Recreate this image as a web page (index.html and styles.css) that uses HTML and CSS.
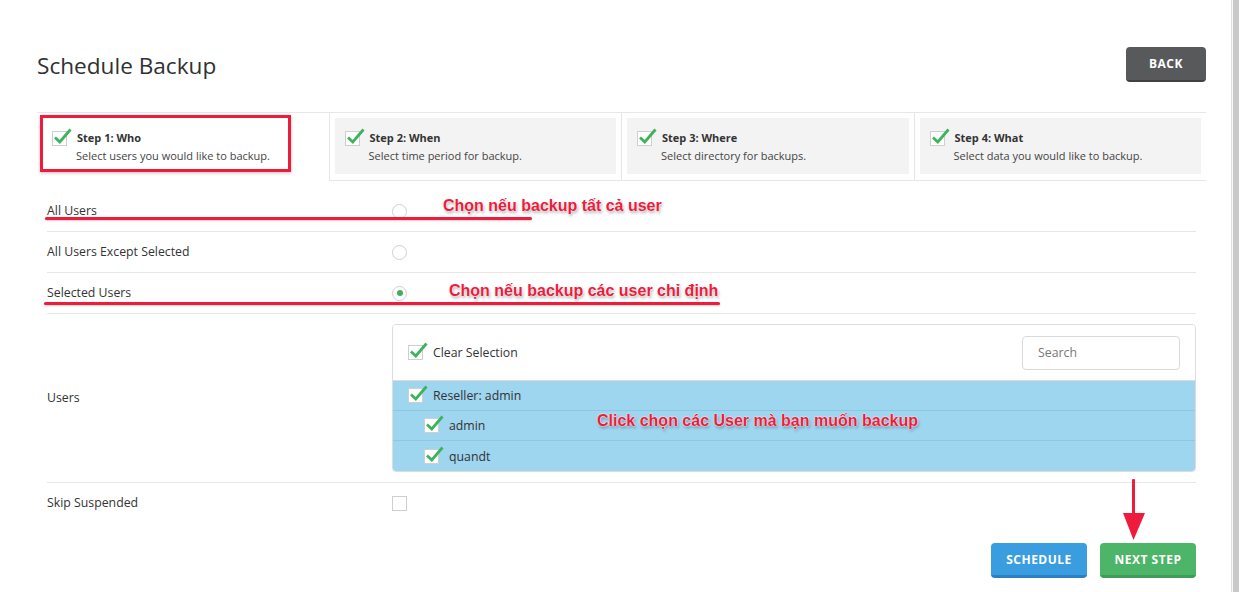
FILE: index.html
```html
<!DOCTYPE html>
<html lang="en">
<head>
<meta charset="utf-8">
<title>Schedule Backup</title>
<link rel="stylesheet" href="styles.css">
</head>
<body>
<div class="frame">
  <main class="page">
    <header class="head">
      <h1 class="title">Schedule Backup</h1>
      <button class="btn btn-back" type="button">BACK</button>
    </header>

    <nav class="steps">
      <div class="step active">
        <div class="step-box">
          <span class="cb"><svg class="tick" viewBox="0 -4 22 20"><path d="M3 6.5 L7.8 11 L18.5 -1.5"/></svg></span>
          <div class="step-title">Step 1: Who</div>
          <div class="step-desc">Select users you would like to backup.</div>
        </div>
      </div>
      <div class="step">
        <div class="step-box">
          <span class="cb"><svg class="tick" viewBox="0 -4 22 20"><path d="M3 6.5 L7.8 11 L18.5 -1.5"/></svg></span>
          <div class="step-title">Step 2: When</div>
          <div class="step-desc">Select time period for backup.</div>
        </div>
      </div>
      <div class="step">
        <div class="step-box">
          <span class="cb"><svg class="tick" viewBox="0 -4 22 20"><path d="M3 6.5 L7.8 11 L18.5 -1.5"/></svg></span>
          <div class="step-title">Step 3: Where</div>
          <div class="step-desc">Select directory for backups.</div>
        </div>
      </div>
      <div class="step">
        <div class="step-box">
          <span class="cb"><svg class="tick" viewBox="0 -4 22 20"><path d="M3 6.5 L7.8 11 L18.5 -1.5"/></svg></span>
          <div class="step-title">Step 4: What</div>
          <div class="step-desc">Select data you would like to backup.</div>
        </div>
      </div>
    </nav>

    <form class="form">
      <div class="row">
        <div class="label">All Users</div>
        <div class="field"><span class="radio"></span></div>
      </div>
      <div class="row">
        <div class="label">All Users Except Selected</div>
        <div class="field"><span class="radio"></span></div>
      </div>
      <div class="row">
        <div class="label">Selected Users</div>
        <div class="field"><span class="radio on"></span></div>
      </div>
      <div class="row row-users">
        <div class="label">Users</div>
        <div class="field">
          <div class="picker">
            <div class="picker-head">
              <div class="item">
                <span class="cb"><svg class="tick" viewBox="0 -4 22 20"><path d="M3 6.5 L7.8 11 L18.5 -1.5"/></svg></span>
                <span>Clear Selection</span>
              </div>
              <input class="search" type="text" placeholder="Search">
            </div>
            <div class="urow">
              <div class="item">
                <span class="cb"><svg class="tick" viewBox="0 -4 22 20"><path d="M3 6.5 L7.8 11 L18.5 -1.5"/></svg></span>
                <span>Reseller: admin</span>
              </div>
            </div>
            <div class="urow child">
              <div class="item">
                <span class="cb"><svg class="tick" viewBox="0 -4 22 20"><path d="M3 6.5 L7.8 11 L18.5 -1.5"/></svg></span>
                <span>admin</span>
              </div>
            </div>
            <div class="urow child">
              <div class="item">
                <span class="cb"><svg class="tick" viewBox="0 -4 22 20"><path d="M3 6.5 L7.8 11 L18.5 -1.5"/></svg></span>
                <span>quandt</span>
              </div>
            </div>
          </div>
        </div>
      </div>
      <div class="row last">
        <div class="label">Skip Suspended</div>
        <div class="field"><span class="cb"></span></div>
      </div>
    </form>

    <div class="actions">
      <button class="btn btn-blue" type="button">SCHEDULE</button>
      <button class="btn btn-green" type="button">NEXT STEP</button>
    </div>

    <div class="anno-box"></div>
    <div class="anno-text t1">Chọn nếu backup tất cả user</div>
    <div class="anno-line l1"></div>
    <div class="anno-text t2">Chọn nếu backup các user chỉ định</div>
    <div class="anno-line l2"></div>
    <div class="anno-text t3">Click chọn các User mà bạn muốn backup</div>
    <svg class="anno-arrow" viewBox="0 0 28 64"><rect x="12" y="1" width="3" height="36" rx="1"/><polygon points="3,35 25,35 13.5,62"/></svg>
  </main>
  <div class="scrollbar"></div>
</div>
</body>
</html>
```

FILE: styles.css
```css
html, body {
  margin: 0;
  padding: 0;
  background: #fff;
}

body {
  font-family: "Open Sans", "Noto Sans", sans-serif;
  color: #333;
}

.frame {
  display: flex;
  min-height: 592px;
}

.page {
  flex: 1;
  position: relative;
  padding: 47px 25px 0 37px;
}

.scrollbar {
  width: 8px;
  background: linear-gradient(to right, #dedede 0 1px, #f8f8f8 1px 2px, #c9c9c9 2px);
}

/* header */
.head {
  display: flex;
  justify-content: space-between;
  align-items: center;
  height: 35px;
}

.title {
  margin: 0;
  font-size: 22.6px;
  font-weight: 400;
  color: #2f3133;
  line-height: 30px;
  padding-top: 2px;
}

.btn {
  border: 0;
  border-radius: 4px;
  color: #fff;
  font-family: "Open Sans", sans-serif;
  font-weight: 700;
  font-size: 12px;
  letter-spacing: 0.5px;
  height: 35px;
  padding: 0;
  cursor: pointer;
}

.btn-back {
  width: 80px;
  background: #58595b;
  border-bottom: 2px solid #3f4042;
}

.btn-blue {
  width: 96px;
  background: #3a9de0;
  border-bottom: 3px solid #2c7fc2;
}

.btn-green {
  width: 96px;
  background: #4cb568;
  border-bottom: 3px solid #3e9d57;
}

/* steps */
.steps {
  display: flex;
  margin-top: 30px;
  border-top: 1px solid #e7e7e7;
}

.step {
  flex: 1;
  padding: 5px 5px 6px;
  border-bottom: 1px solid #e7e7e7;
}

.step + .step {
  border-left: 1px solid #e7e7e7;
}

.step.active {
  border-bottom-color: transparent;
}

.step-box {
  box-sizing: border-box;
  height: 56px;
  padding: 12px 10px 0;
  background: #f3f3f3;
  display: grid;
  grid-template-columns: 15px 1fr;
  column-gap: 10px;
  row-gap: 2px;
  align-content: start;
}

.active .step-box {
  background: transparent;
}

.step-box .cb {
  align-self: center;
}

.step-title {
  font-size: 11px;
  font-weight: 700;
  line-height: 16px;
  color: #333;
}

.step-desc {
  grid-column: 2;
  font-size: 11px;
  line-height: 16px;
  color: #444;
  margin-left: -1px;
}

/* checkbox + radio */
.cb {
  position: relative;
  display: inline-block;
  box-sizing: border-box;
  width: 15px;
  height: 15px;
  border: 1px solid #cfcfcf;
  background: #fff;
  flex: none;
}

.tick {
  position: absolute;
  left: -1px;
  top: -5px;
  width: 22px;
  height: 20px;
  overflow: visible;
}

.tick path {
  fill: none;
  stroke: #3db35c;
  stroke-width: 2.8;
  stroke-linecap: butt;
  stroke-linejoin: miter;
}

.radio {
  display: inline-block;
  box-sizing: border-box;
  width: 15px;
  height: 15px;
  border: 1px solid #cfcfcf;
  border-radius: 50%;
  background: #fff;
  position: relative;
  vertical-align: middle;
}

.radio.on::after {
  content: "";
  position: absolute;
  left: 3.5px;
  top: 3.5px;
  width: 6px;
  height: 6px;
  border-radius: 50%;
  background: #44ad5b;
}

/* form */
.form {
  margin: 10px 10px 0;
}

.row {
  display: flex;
  align-items: center;
  min-height: 40px;
  border-bottom: 1px solid #e7e7e7;
}

.row.last {
  border-bottom: 0;
}

.label {
  width: 345px;
  flex: none;
  font-size: 12.3px;
  color: #333;
  padding-bottom: 2px;
}

.field {
  flex: 1;
  display: flex;
  align-items: center;
}

.row-users {
  padding: 10px 0;
}

.picker {
  flex: 1;
  border: 1px solid #dcdcdc;
  border-radius: 4px;
  overflow: hidden;
}

.picker-head {
  height: 55px;
  display: flex;
  align-items: center;
  justify-content: space-between;
  padding: 0 15px;
  border-bottom: 1px solid #dcdcdc;
  background: #fff;
}

.item {
  display: flex;
  align-items: center;
  gap: 10px;
  font-size: 12.3px;
  color: #333;
}

.search {
  box-sizing: border-box;
  width: 158px;
  height: 34px;
  border: 1px solid #d9d9d9;
  border-radius: 4px;
  padding: 0 15px;
  font-family: "Open Sans", sans-serif;
  font-size: 12.3px;
  color: #333;
  outline: none;
}

.search::placeholder {
  color: #777;
}

.urow {
  box-sizing: border-box;
  height: 30px;
  display: flex;
  align-items: center;
  padding-left: 15px;
  background: #9ed5ef;
  border-bottom: 1px solid #8dc8e3;
}

.urow:last-child {
  border-bottom: 0;
}

.urow.child {
  padding-left: 31px;
}

/* actions */
.actions {
  display: flex;
  justify-content: flex-end;
  gap: 13px;
  margin: 20px 10px 0;
}

/* annotations (overlay) */
.anno-box {
  position: absolute;
  left: 40px;
  top: 115px;
  width: 251px;
  height: 57px;
  box-sizing: border-box;
  border: 3px solid #ee1b3c;
  box-shadow: 0 1px 3px rgba(0, 0, 0, 0.25);
}

.anno-text {
  position: absolute;
  font-family: "Liberation Sans", Arial, sans-serif;
  font-weight: 700;
  font-size: 16px;
  line-height: 18px;
  color: #ee1b3c;
  white-space: nowrap;
  text-shadow: 0 0 1px #fff, 0 0 2px #fff, 1px 2px 3px rgba(0, 0, 0, 0.35);
}

.t1 { left: 443px; top: 197px; }
.t2 { left: 449px; top: 282px; }
.t3 { left: 597px; top: 412px; }

.anno-line {
  position: absolute;
  height: 3px;
  border-radius: 2px;
  background: #ee1b3c;
  box-shadow: 0 1px 2px rgba(0, 0, 0, 0.2);
}

.l1 { left: 45px; top: 217px; width: 487px; }
.l2 { left: 44px; top: 302px; width: 676px; }

.anno-arrow {
  position: absolute;
  left: 1120px;
  top: 478px;
  width: 28px;
  height: 64px;
  fill: #ee1b3c;
}
```
